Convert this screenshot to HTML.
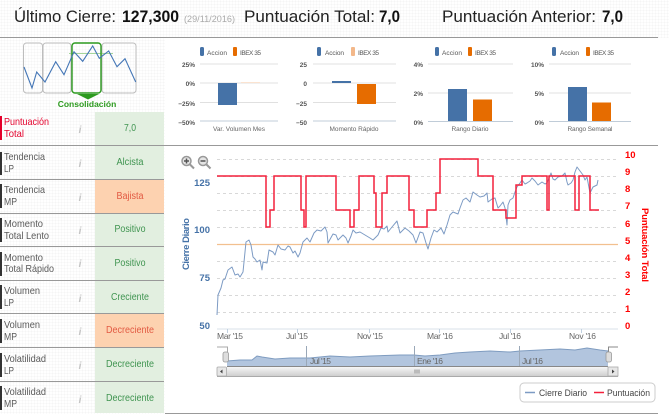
<!DOCTYPE html>
<html><head><meta charset="utf-8">
<style>
html,body{margin:0;padding:0;width:669px;height:414px;overflow:hidden;background-color:#fff;background-image:radial-gradient(#f5f5f5 0.8px,transparent 0.9px);background-size:3px 3px}
svg{display:block;position:absolute;left:0;top:0}
text{font-family:"Liberation Sans",sans-serif}
.h{font-size:17px;fill:#222}
.hb{font-size:17px;fill:#111;font-weight:bold}
.l{font-size:10.5px;fill:#5a5a5a}
.lr{font-size:10.5px;fill:#e4002b}
.v{font-size:10px;text-anchor:middle;fill:#3f9450}
.vr{font-size:10px;text-anchor:middle;fill:#e25a42}
.i{font-size:10px;fill:#c4c4c4;font-style:italic;font-weight:bold;text-anchor:middle}
.m{font-size:6.5px;fill:#555}
.ma{font-size:6.5px;fill:#555;text-anchor:end;font-weight:bold}
.mt{font-size:6.5px;fill:#666;text-anchor:middle}
.ya{font-size:9.5px;font-weight:bold;fill:#4572a7;text-anchor:end}
.yb{font-size:9.5px;font-weight:bold;fill:#f00}
.x{font-size:8.5px;fill:#666}
.n{font-size:8.5px;fill:#666}
.lg{font-size:9.5px;fill:#444}
</style></head><body>
<svg width="669" height="414" viewBox="0 0 669 414">
<defs>
<linearGradient id="sb" x1="0" y1="0" x2="0" y2="1"><stop offset="0" stop-color="#f6f6f6"/><stop offset="1" stop-color="#cfcfcf"/></linearGradient>
</defs>
<rect x="165" y="38" width="504" height="376" fill="#fff"/>

<!-- header -->
<text class="h" x="14" y="22" textLength="102" lengthAdjust="spacingAndGlyphs">Último Cierre:</text>
<text class="hb" x="122" y="22" textLength="57" lengthAdjust="spacingAndGlyphs">127,300</text>
<text x="184" y="22" font-size="9" fill="#aaa" textLength="51" lengthAdjust="spacingAndGlyphs">(29/11/2016)</text>
<text class="h" x="244" y="22" textLength="131" lengthAdjust="spacingAndGlyphs">Puntuación Total:</text>
<text class="hb" x="379" y="22" textLength="21" lengthAdjust="spacingAndGlyphs">7,0</text>
<text class="h" x="442" y="22" textLength="154" lengthAdjust="spacingAndGlyphs">Puntuación Anterior:</text>
<text class="hb" x="602" y="22" textLength="21" lengthAdjust="spacingAndGlyphs">7,0</text>
<rect x="0" y="37" width="658" height="1" fill="#999"/>

<!-- consolidation icon -->
<g fill="none" stroke="#bdbdbd" stroke-width="1">
<rect x="23.5" y="43" width="19" height="50" rx="3"/>
<rect x="43" y="43" width="28" height="50" rx="3"/>
<rect x="102" y="43" width="34" height="50" rx="3"/>
</g>
<line x1="69" y1="53.5" x2="113" y2="53.5" stroke="#a5d69b" stroke-width="1"/>
<rect x="72" y="43" width="29" height="50" rx="3" fill="none" stroke="#2c9a1e" stroke-width="1.4"/>
<polygon points="77,94 99,94 88,99.5" fill="#2c9a1e"/>
<polyline fill="none" stroke="#4476b6" stroke-width="1.1" points="24,67 32,88 36.700,72 45,82 55.700,61.700 64,74.700 74,51.700 82.700,61.300 92.700,46 99.300,58.300 108.700,51 117,66.700 125,58.700 135.700,82"/>
<text x="87" y="107" font-size="8.5" font-weight="bold" fill="#2c9a1e" text-anchor="middle">Consolidación</text>

<!-- left table -->
<rect x="95" y="112" width="69" height="301" fill="#e2efe0"/>
<rect x="95" y="180" width="69" height="33" fill="#fdd2b0"/>
<rect x="95" y="314" width="69" height="33" fill="#fdd2b0"/>
<g fill="#999">
<rect x="0" y="145" width="658" height="1"/>
<rect x="0" y="179" width="164" height="1"/>
<rect x="0" y="213" width="164" height="1"/>
<rect x="0" y="246" width="164" height="1"/>
<rect x="0" y="280" width="164" height="1"/>
<rect x="0" y="313" width="164" height="1"/>
<rect x="0" y="347" width="164" height="1"/>
<rect x="0" y="381" width="164" height="1"/>
<rect x="165" y="413" width="493" height="1"/>
</g>
<rect x="0" y="116" width="2" height="24" fill="#e4002b"/>
<g fill="#333">
<rect x="0" y="152" width="2" height="23"/><rect x="0" y="184" width="2" height="24"/>
<rect x="0" y="218" width="2" height="24"/><rect x="0" y="252" width="2" height="24"/>
<rect x="0" y="285" width="2" height="24"/><rect x="0" y="319" width="2" height="24"/>
<rect x="0" y="353" width="2" height="24"/><rect x="0" y="386" width="2" height="24"/>
</g>
<text class="lr" x="4" y="125" textLength="45" lengthAdjust="spacingAndGlyphs">Puntuación</text><text class="lr" x="4" y="137" textLength="20" lengthAdjust="spacingAndGlyphs">Total</text>
<text class="l" x="4" y="160" textLength="41" lengthAdjust="spacingAndGlyphs">Tendencia</text><text class="l" x="4" y="172" textLength="10" lengthAdjust="spacingAndGlyphs">LP</text>
<text class="l" x="4" y="193" textLength="41" lengthAdjust="spacingAndGlyphs">Tendencia</text><text class="l" x="4" y="205" textLength="13" lengthAdjust="spacingAndGlyphs">MP</text>
<text class="l" x="4" y="227" textLength="39" lengthAdjust="spacingAndGlyphs">Momento</text><text class="l" x="4" y="239" textLength="45" lengthAdjust="spacingAndGlyphs">Total Lento</text>
<text class="l" x="4" y="261" textLength="39" lengthAdjust="spacingAndGlyphs">Momento</text><text class="l" x="4" y="272" textLength="50" lengthAdjust="spacingAndGlyphs">Total Rápido</text>
<text class="l" x="4" y="294" textLength="36" lengthAdjust="spacingAndGlyphs">Volumen</text><text class="l" x="4" y="306" textLength="10" lengthAdjust="spacingAndGlyphs">LP</text>
<text class="l" x="4" y="328" textLength="36" lengthAdjust="spacingAndGlyphs">Volumen</text><text class="l" x="4" y="340" textLength="13" lengthAdjust="spacingAndGlyphs">MP</text>
<text class="l" x="4" y="362" textLength="42" lengthAdjust="spacingAndGlyphs">Volatilidad</text><text class="l" x="4" y="374" textLength="10" lengthAdjust="spacingAndGlyphs">LP</text>
<text class="l" x="4" y="395" textLength="42" lengthAdjust="spacingAndGlyphs">Volatilidad</text><text class="l" x="4" y="407" textLength="13" lengthAdjust="spacingAndGlyphs">MP</text>
<g>
<text class="i" x="80" y="133">i</text><text class="i" x="80" y="167">i</text><text class="i" x="80" y="201">i</text>
<text class="i" x="80" y="234">i</text><text class="i" x="80" y="267">i</text><text class="i" x="80" y="302">i</text>
<text class="i" x="80" y="335">i</text><text class="i" x="80" y="369">i</text><text class="i" x="80" y="403">i</text>
</g>
<text class="v" x="130" y="131" textLength="12" lengthAdjust="spacingAndGlyphs">7,0</text>
<text class="v" x="130" y="165" textLength="27" lengthAdjust="spacingAndGlyphs">Alcista</text>
<text class="vr" x="130" y="199" textLength="27" lengthAdjust="spacingAndGlyphs">Bajista</text>
<text class="v" x="130" y="232" textLength="31" lengthAdjust="spacingAndGlyphs">Positivo</text>
<text class="v" x="130" y="266" textLength="31" lengthAdjust="spacingAndGlyphs">Positivo</text>
<text class="v" x="130" y="300" textLength="38" lengthAdjust="spacingAndGlyphs">Creciente</text>
<text class="vr" x="130" y="333" textLength="48" lengthAdjust="spacingAndGlyphs">Decreciente</text>
<text class="v" x="130" y="367" textLength="48" lengthAdjust="spacingAndGlyphs">Decreciente</text>
<text class="v" x="130" y="401" textLength="48" lengthAdjust="spacingAndGlyphs">Decreciente</text>

<!-- mini charts legends -->
<g>
<rect x="200" y="47" width="4" height="9" rx="1.500" fill="#4572a7"/><text class="m" x="207" y="55" textLength="20">Accion</text>
<rect x="233" y="47" width="4" height="9" rx="1" fill="#e66c00"/><text class="m" x="240" y="55" textLength="21">IBEX 35</text>
<rect x="317" y="47" width="4" height="9" rx="1.500" fill="#4572a7"/><text class="m" x="325" y="55" textLength="19">Accion</text>
<rect x="351" y="47" width="4" height="9" rx="1" fill="#f3b88a"/><text class="m" x="358" y="55" textLength="21">IBEX 35</text>
<rect x="435" y="47" width="4" height="9" rx="1.500" fill="#4572a7"/><text class="m" x="442" y="55" textLength="20">Accion</text>
<rect x="468" y="47" width="4" height="9" rx="1" fill="#e66c00"/><text class="m" x="475" y="55" textLength="21">IBEX 35</text>
<rect x="552" y="47" width="4" height="9" rx="1.500" fill="#4572a7"/><text class="m" x="560" y="55" textLength="19">Accion</text>
<rect x="586" y="47" width="4" height="9" rx="1" fill="#e66c00"/><text class="m" x="593" y="55" textLength="21">IBEX 35</text>
</g>
<g stroke="#e0e0e0" stroke-width="1">
<line x1="200" y1="64" x2="278" y2="64"/><line x1="200" y1="83" x2="278" y2="83"/><line x1="200" y1="102.500" x2="278" y2="102.500"/>
<line x1="313" y1="64" x2="396" y2="64"/><line x1="313" y1="83" x2="396" y2="83"/><line x1="313" y1="102.500" x2="396" y2="102.500"/>
<line x1="428" y1="64" x2="513" y2="64"/><line x1="428" y1="93" x2="513" y2="93"/>
<line x1="549" y1="64" x2="631" y2="64"/><line x1="549" y1="93" x2="631" y2="93"/>
</g>
<g stroke="#c0ccd8" stroke-width="1">
<line x1="200" y1="121" x2="278" y2="121"/><line x1="313" y1="121" x2="396" y2="121"/>
<line x1="428" y1="121.500" x2="513" y2="121.500"/><line x1="549" y1="121.500" x2="631" y2="121.500"/>
</g>
<g>
<rect x="218" y="83" width="19" height="22" fill="#4572a7"/><rect x="241" y="82" width="19" height="1" fill="#fbe3d0"/>
<rect x="332" y="81" width="19" height="2" fill="#4572a7"/><rect x="357" y="84" width="19" height="20" fill="#e66c00"/>
<rect x="448" y="89" width="19" height="32" fill="#4572a7"/><rect x="473" y="99.500" width="19" height="21.500" fill="#e66c00"/>
<rect x="568" y="87" width="19" height="34" fill="#4572a7"/><rect x="592" y="102.500" width="19" height="18.500" fill="#e66c00"/>
</g>
<text class="ma" x="195" y="67">25%</text><text class="ma" x="195" y="86">0%</text><text class="ma" x="195" y="106">−25%</text><text class="ma" x="195" y="125">−50%</text>
<text class="ma" x="307" y="67">25</text><text class="ma" x="307" y="86">0</text><text class="ma" x="307" y="106">−25</text><text class="ma" x="307" y="125">−50</text>
<text class="ma" x="423" y="67">4%</text><text class="ma" x="423" y="96">2%</text><text class="ma" x="423" y="125">0%</text>
<text class="ma" x="544" y="67">10%</text><text class="ma" x="544" y="96">5%</text><text class="ma" x="544" y="125">0%</text>
<text class="mt" x="239" y="131" textLength="52">Var. Volumen Mes</text>
<text class="mt" x="354" y="131" textLength="49">Momento Rápido</text>
<text class="mt" x="470" y="131" textLength="37">Rango Diario</text>
<text class="mt" x="590" y="131" textLength="45">Rango Semanal</text>

<!-- main chart grid -->
<g stroke="#d8d8d8" stroke-width="1" stroke-dasharray="3 3">
<line x1="217" x2="618" y1="159.500" y2="159.500"/><line x1="217" x2="618" y1="176.500" y2="176.500"/>
<line x1="217" x2="618" y1="193.500" y2="193.500"/><line x1="217" x2="618" y1="210.500" y2="210.500"/>
<line x1="217" x2="618" y1="227.500" y2="227.500"/>
<line x1="217" x2="618" y1="261.500" y2="261.500"/><line x1="217" x2="618" y1="278.500" y2="278.500"/>
<line x1="217" x2="618" y1="295.500" y2="295.500"/><line x1="217" x2="618" y1="312.500" y2="312.500"/>
</g>
<line x1="217" x2="618" y1="329" y2="329" stroke="#d8e0e8" stroke-width="1"/>
<line x1="217" x2="618" y1="244.500" y2="244.500" stroke="#f2c08f" stroke-width="1.200"/>
<g stroke="#c0d0e0" stroke-width="1">
<line x1="227.500" y1="329" x2="227.500" y2="333"/><line x1="297.500" y1="329" x2="297.500" y2="333"/><line x1="369.500" y1="329" x2="369.500" y2="333"/>
<line x1="439.500" y1="329" x2="439.500" y2="333"/><line x1="510.500" y1="329" x2="510.500" y2="333"/><line x1="581.500" y1="329" x2="581.500" y2="333"/>
</g>

<!-- blue series -->
<polyline fill="none" stroke="#7d9bc4" stroke-width="1" stroke-linejoin="round" points="217,315 218,295 221,288 223,280 225,279 228,270 232,267 235,275 238,274 240,277 243,272 246,242 249,240 251,245 253,257 255,259 257,262 260,260 262,270 263,262 267,263 269,250 273,252 275,255 278,245 281,249 285,250 288,246 290,247 293,253 295,251 298,257 300,253 303,242 307,238 310,242 314,233 317,230 321,231 325,227 327,232 328,243 333,234 336,235 338,240 341,237 343,235 346,238 348,243 351,236 353,230 356,233 360,232 365,235 370,238 373,240 378,235 381,228 384,229 387,226 388,232 392,227 397,221 399,229 400,233 405,228 409,231 413,235 416,243 420,232 423,233 426,243 428,249 431,238 434,230 437,232 441,228 444,234 447,225 450,215 453,212 458,214 460,208 463,200 466,198 470,202 473,192 477,195 480,197 484,196 487,193 488,202 492,199 495,198 498,208 500,206 503,202 505,208 507,225 508,205 510,200 513,198 515,192 517,187 520,183 522,180 525,184 527,183 530,181 532,178 535,181 538,185 542,182 545,184 547,183 549,178 551,173 553,179 555,180 558,177 562,176 565,173 567,182 568,185 571,183 573,180 575,172 577,167 580,171 583,175 585,180 587,177 590,193 593,187 597,185 598,180"/>

<!-- red series -->
<polyline fill="none" stroke="#f4203c" stroke-width="1.500" points="217,176 266,176 266,227 270,227 270,210 274,210 274,176 301,176 301,210 304,210 304,227 306,227 306,176 336,176 336,210 350,210 350,227 354,227 354,210 359,210 359,176 374,176 374,193 376,193 376,227 382,227 382,193 387,193 387,176 409,176 409,210 414,210 414,227 427,227 427,210 436,210 436,193 440,193 440,159 478,159 478,176 493,176 493,210 506,210 506,218 516,218 516,185 522,185 522,176 547,176 547,210 549,210 549,176 575,176 575,210 579,210 579,176 590,176 590,210 599,210"/>

<!-- zoom icons -->
<g fill="none" stroke="#999" stroke-width="1.500">
<circle cx="186.500" cy="161" r="4.500" fill="#e4e4e4"/><line x1="190" y1="164.500" x2="194" y2="168.500" stroke-width="2"/>
<line x1="184" y1="161" x2="189" y2="161" stroke="#555"/><line x1="186.500" y1="158.500" x2="186.500" y2="163.500" stroke="#555"/>
<circle cx="203" cy="161" r="4.500" fill="#e4e4e4"/><line x1="206.500" y1="164.500" x2="210.500" y2="168.500" stroke-width="2"/>
<line x1="200.500" y1="161" x2="205.500" y2="161" stroke="#555"/>
</g>

<!-- axis labels -->
<text class="ya" x="210" y="186">125</text><text class="ya" x="210" y="233">100</text><text class="ya" x="210" y="281">75</text><text class="ya" x="210" y="329">50</text>
<text class="yb" x="625" y="158">10</text><text class="yb" x="625" y="175">9</text><text class="yb" x="625" y="192">8</text><text class="yb" x="625" y="209">7</text><text class="yb" x="625" y="227">6</text><text class="yb" x="625" y="244">5</text><text class="yb" x="625" y="261">4</text><text class="yb" x="625" y="278">3</text><text class="yb" x="625" y="295">2</text><text class="yb" x="625" y="312">1</text><text class="yb" x="625" y="329">0</text>
<text transform="translate(189,270) rotate(-90)" font-size="9.5" font-weight="bold" fill="#4572a7" textLength="52">Cierre Diario</text>
<text transform="translate(642,208) rotate(90)" font-size="9.5" font-weight="bold" fill="#f00" textLength="74">Puntuación Total</text>

<!-- x labels -->
<text class="x" x="217" y="339" textLength="26">Mar '15</text><text class="x" x="286" y="339" textLength="22">Jul '15</text><text class="x" x="357" y="339" textLength="26">Nov '15</text>
<text class="x" x="427" y="339" textLength="26">Mar '16</text><text class="x" x="499" y="339" textLength="22">Jul '16</text><text class="x" x="569" y="339" textLength="27">Nov '16</text>

<!-- navigator -->
<polygon fill="#b2c5de" stroke="none" points="227,366 227,361 240,360 252,360 257,356 262,357 275,359 290,358 310,358 330,356 350,357 370,356 400,355 414,355 425,356 440,355 455,353 470,352 490,351 510,352 520,351 540,350 560,349 575,350 587,348 600,350 608,351 608,366"/>
<polyline fill="none" stroke="#7f9cc0" stroke-width="1" points="227,361 240,360 252,360 257,356 262,357 275,359 290,358 310,358 330,356 350,357 370,356 400,355 414,355 425,356 440,355 455,353 470,352 490,351 510,352 520,351 540,350 560,349 575,350 587,348 600,350 608,351"/>
<g stroke="#9aa8b8" stroke-width="1">
<line x1="306.500" y1="346" x2="306.500" y2="366"/><line x1="414.500" y1="346" x2="414.500" y2="366"/><line x1="519.500" y1="346" x2="519.500" y2="366"/>
</g>
<text class="n" x="310" y="364" textLength="21">Jul '15</text><text class="n" x="417" y="364" textLength="26">Ene '16</text><text class="n" x="522" y="364" textLength="21">Jul '16</text>
<line x1="227" y1="366.500" x2="608" y2="366.500" stroke="#888" stroke-width="1"/>
<polyline fill="none" stroke="#aaa" stroke-width="1" points="217,347 227.500,347 227.500,352"/>
<polyline fill="none" stroke="#888" stroke-width="1" points="618,347 608.500,347 608.500,352"/>
<rect x="223" y="352" width="5.500" height="10" rx="2" fill="#ddd" stroke="#999" stroke-width="0.800"/>
<rect x="606" y="352" width="5.500" height="10" rx="2" fill="#ddd" stroke="#999" stroke-width="0.800"/>

<!-- scrollbar -->
<rect x="217" y="367" width="401" height="9" fill="url(#sb)"/>
<line x1="217" y1="376.500" x2="618" y2="376.500" stroke="#aaa" stroke-width="1"/>
<rect x="217" y="367" width="9.500" height="9" rx="1" fill="#e6e6e6" stroke="#aaa" stroke-width="0.800"/>
<rect x="608" y="367" width="10" height="9" fill="#e6e6e6" stroke="#aaa" stroke-width="0.800"/>
<polygon points="222.500,369.500 222.500,373.500 220,371.500" fill="#444"/>
<polygon points="612,369.500 612,373.500 614.500,371.500" fill="#444"/>
<rect x="414" y="369.500" width="6" height="4" fill="#bbb"/>

<!-- legend -->
<rect x="520" y="383" width="135" height="19" rx="4" fill="#fff" stroke="#ccc" stroke-width="1"/>
<line x1="525" y1="392.500" x2="535" y2="392.500" stroke="#7d9bc4" stroke-width="1.500"/>
<text class="lg" x="539" y="396" textLength="48" lengthAdjust="spacingAndGlyphs">Cierre Diario</text>
<line x1="594" y1="392.500" x2="604" y2="392.500" stroke="#f4203c" stroke-width="1.500"/>
<text class="lg" x="607" y="396" textLength="43" lengthAdjust="spacingAndGlyphs">Puntuación</text>
</svg>
</body></html>
